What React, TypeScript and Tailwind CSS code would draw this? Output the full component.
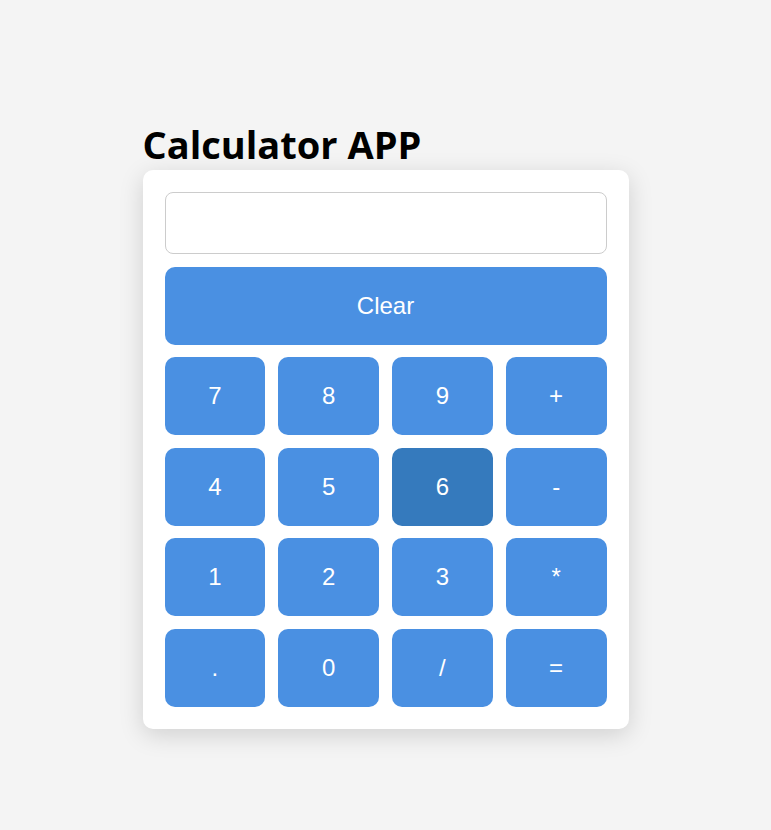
const keys = ["7", "8", "9", "+", "4", "5", "6", "-", "1", "2", "3", "*", ".", "0", "/", "="];

export default function App() {
  return (
    <div className="min-h-[830px] bg-[#f4f4f4] pt-[118px]">
      <div className="w-[486px] mx-auto">
        <h1 className="text-[38px] leading-[52px] font-bold text-black font-['Open_Sans',sans-serif]">
          Calculator APP
        </h1>
        <div className="bg-white rounded-[10px] p-[22px] shadow-[0_6px_24px_rgba(0,0,0,0.15)] font-['Liberation_Sans',Arial,sans-serif]">
          <input
            type="text"
            readOnly
            className="block w-full h-[62px] rounded-[8px] border border-[#cccccc] bg-white px-3 text-2xl text-right outline-none"
          />
          <button className="mt-[13px] w-full h-[78px] rounded-[10px] bg-[#4a90e2] text-white text-[24px]">
            Clear
          </button>
          <div className="mt-[12px] grid grid-cols-4 gap-x-[13px] gap-y-[12.7px]">
            {keys.map((k) => (
              <button
                key={k}
                className={`h-[78px] rounded-[10px] text-white text-[24px] ${k === "6" ? "bg-[#357abd]" : "bg-[#4a90e2]"}`}
              >
                {k}
              </button>
            ))}
          </div>
        </div>
      </div>
    </div>
  );
}
